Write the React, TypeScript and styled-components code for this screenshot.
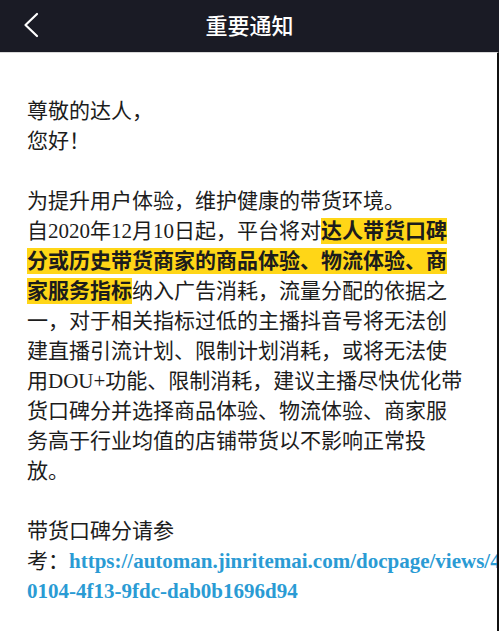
import styled, { createGlobalStyle } from "styled-components";

const GlobalStyle = createGlobalStyle`
    html, body {
        margin: 0;
        padding: 0;
        background: #ffffff;
        overflow: hidden;
    }
    * {
        box-sizing: border-box;
    }
`;

const Page = styled.div`
    width: 100%;
    min-height: 100vh;
    display: flex;
    flex-direction: column;
    background: #ffffff;
`;

const TopBar = styled.header`
    height: 52px;
    flex-shrink: 0;
    background: #1a1b25;
    display: flex;
    align-items: center;
    justify-content: center;
    position: relative;
`;

const BackButton = styled.button`
    position: absolute;
    left: 20px;
    top: 9px;
    width: 22px;
    height: 32px;
    padding: 0;
    border: none;
    background: transparent;
    display: flex;
    align-items: center;
    justify-content: center;
    cursor: pointer;
`;

const Title = styled.h1`
    margin: 0;
    color: #ffffff;
    font-family: "Noto Sans CJK SC", "Noto Sans", sans-serif;
    font-size: 22px;
    font-weight: 500;
    letter-spacing: 0;
    line-height: 1;
    margin-top: -4px;
`;

const Article = styled.main`
    flex: 1;
    border-top: 1px solid #d9d9d9;
    border-right: 2px solid #111111;
    padding: 43px 32px 0 27px;
    overflow: hidden;
    color: #1c1c1c;
    font-family: "Liberation Serif", "Noto Sans CJK SC", serif;
    font-size: 21px;
    line-height: 30px;
`;

const Paragraph = styled.p`
    margin: 0 0 30px 0;
    width: 438px;
`;

const Mark = styled.span`
    background: #ffd617;
    font-weight: 700;
    padding: 1px 0;
`;

const Line = styled.span<{ $nowrap?: boolean }>`
    display: block;
    white-space: ${(p) => (p.$nowrap ? "nowrap" : "normal")};
`;

const Link = styled.a`
    color: #2a9bd4;
    font-family: "Liberation Serif", serif;
    font-weight: 700;
    text-decoration: none;
`;

function BackIcon() {
    return (
        <svg width="16" height="26" viewBox="0 0 16 26" fill="none">
            <path
                d="M14 2 L2.5 13 L14 24"
                stroke="#ffffff"
                strokeWidth="2.2"
                strokeLinecap="round"
                strokeLinejoin="round"
            />
        </svg>
    );
}

export default function App() {
    return (
        <>
            <GlobalStyle />
            <Page>
                <TopBar>
                    <BackButton aria-label="返回">
                        <BackIcon />
                    </BackButton>
                    <Title>重要通知</Title>
                </TopBar>

                <Article>
                    <Paragraph>
                        尊敬的达人，
                        <br />
                        您好！
                    </Paragraph>

                    <Paragraph>
                        为提升用户体验，维护健康的带货环境。
                        <br />
                        自2020年12月10日起，平台将对
                        <Mark>达人带货口碑分或历史带货商家的商品体验、物流体验、商家服务指标</Mark>
                        纳入广告消耗，流量分配的依据之一，对于相关指标过低的主播抖音号将无法创建直播引流计划、限制计划消耗，或将无法使用DOU+功能、限制消耗，建议主播尽快优化带货口碑分并选择商品体验、物流体验、商家服务高于行业均值的店铺带货以不影响正常投放。
                    </Paragraph>

                    <Paragraph>
                        <Line>带货口碑分请参</Line>
                        <Line $nowrap>
                            考：
                            <Link href="#">https://automan.jinritemai.com/docpage/views/4c7e2a1b-</Link>
                        </Line>
                        <Line>
                            <Link href="#">0104-4f13-9fdc-dab0b1696d94</Link>
                        </Line>
                    </Paragraph>
                </Article>
            </Page>
        </>
    );
}
